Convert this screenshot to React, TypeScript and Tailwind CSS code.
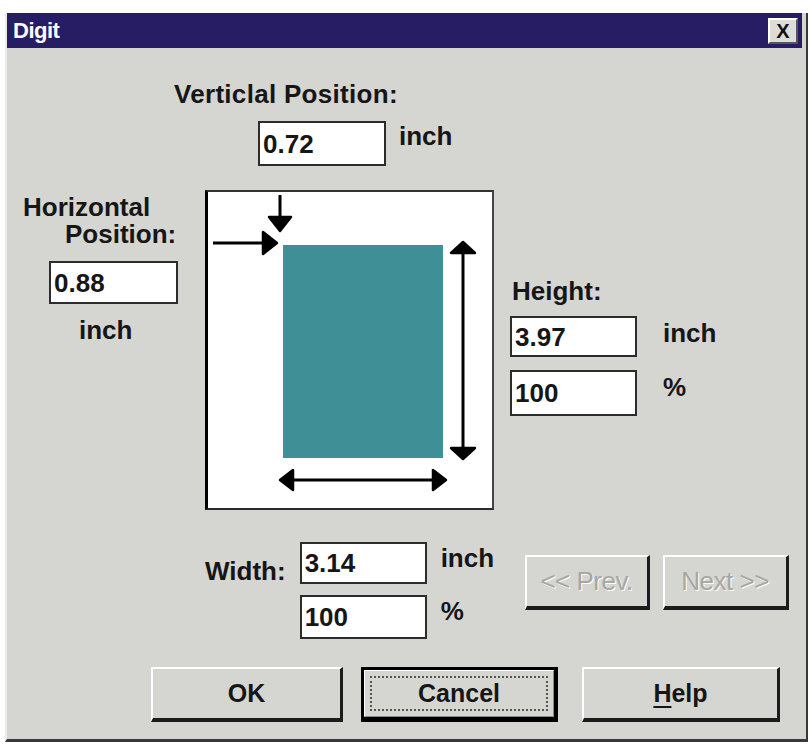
import React from "react";

function Field({ value, w, h }: { value: string; w: number; h: number }) {
  const size =
    w === 129 ? "w-[129px]" : w === 128 ? "w-[128px]" : "w-[127px]";
  const height =
    h === 41 ? "h-[41px]" : h === 42 ? "h-[42px]" : h === 43 ? "h-[43px]" : h === 44 ? "h-[44px]" : h === 45 ? "h-[45px]" : "h-[46px]";
  return (
    <div
      className={`${size} ${height} shrink-0 flex items-center bg-white border-2 border-[#2c2c2c] pl-[3px] text-[26px] leading-[30px] font-bold text-[#161616]`}
    >
      {value}
    </div>
  );
}

function Unit({ children }: { children: React.ReactNode }) {
  return <div className="text-[26px] leading-[30px] font-bold text-[#161616]">{children}</div>;
}

function Preview() {
  return (
    <div className="w-[289px] h-[320px] shrink-0 bg-white border-l-[3px] border-l-black border-t-2 border-t-[#333] border-r-2 border-r-[#444] border-b-2 border-b-[#2a2a2a]">
      <svg width="284" height="316" viewBox="0 0 284 316">
        <rect x="75" y="53" width="160" height="213" fill="#3f8f97" />
        <g stroke="#000" strokeWidth="3" fill="none">
          <line x1="72" y1="3" x2="72" y2="27" />
          <line x1="5" y1="51" x2="56" y2="51" />
          <line x1="255" y1="60" x2="255" y2="256" />
          <line x1="84" y1="288" x2="226" y2="288" />
        </g>
        <g fill="#000" stroke="#000" strokeWidth="2.5" strokeLinejoin="round">
          <polygon points="61,25 83,25 72,39" />
          <polygon points="55,40 55,62 69,51" />
          <polygon points="255,50 243,61 267,61" />
          <polygon points="255,267 243,256 267,256" />
          <polygon points="72,288 85,278 85,298" />
          <polygon points="238,288 225,278 225,298" />
        </g>
      </svg>
    </div>
  );
}

function Button({
  children,
  w,
  focused,
}: {
  children: React.ReactNode;
  w: string;
  focused?: boolean;
}) {
  if (focused) {
    return (
      <div className={`${w} h-[55px] shrink-0 border-[3px] border-black border-b-[5px] border-r-[4px] bg-[#d5d5d1]`}>
        <div className="h-full border-t border-l border-white border-b border-r border-b-[#8a8a86] border-r-[#8a8a86] p-[5px]">
          <div className="h-full flex items-center justify-center border-2 border-dotted border-[#555] text-[25px] font-bold text-[#161616]">
            {children}
          </div>
        </div>
      </div>
    );
  }
  return (
    <div
      className={`${w} h-[55px] shrink-0 flex items-center justify-center bg-[#d5d5d1] border-t-2 border-l-2 border-t-white border-l-white border-r-[3px] border-b-[4px] border-r-[#1c1c1c] border-b-[#1c1c1c] text-[25px] font-bold text-[#161616]`}
    >
      {children}
    </div>
  );
}

function NavButton({ children, w }: { children: React.ReactNode; w: string }) {
  return (
    <div
      className={`${w} h-[55px] shrink-0 flex items-center justify-center bg-[#d5d5d1] border-t-2 border-l-2 border-t-white border-l-white border-r-[3px] border-b-[4px] border-r-[#1c1c1c] border-b-[#1c1c1c] text-[26px] text-[#a6a6a2] tracking-[-0.5px] [text-shadow:1px_1px_0_#ffffff]`}
    >
      {children}
    </div>
  );
}

export default function App() {
  return (
    <div className="w-[812px] h-[745px] bg-white pt-[13px] overflow-hidden font-['Liberation_Sans',Arial,sans-serif]">
      <div className="ml-[5px] w-[803px] h-[729px] flex flex-col bg-[#d5d5d1] border-l-2 border-l-[#ebebe8] border-r-2 border-r-[#383838] border-b-[3px] border-b-[#383838]">
        {/* Title bar */}
        <div className="h-[35px] mr-[4px] shrink-0 flex items-center justify-between bg-[#271d64] pl-[6px] pr-[4px]">
          <span className="text-[22px] font-bold text-white tracking-[-0.5px]">Digit</span>
          <div className="w-[30px] h-[26px] flex items-center justify-center bg-[#dcdcd8] border-t-2 border-l-2 border-white border-r-2 border-b-2 border-r-[#555] border-b-[#555] text-[20px] font-bold text-[#111] leading-none">
            X
          </div>
        </div>

        {/* Vertical position */}
        <div className="mt-[31px] ml-[167px] text-[26px] leading-[30px] font-bold text-[#161616] tracking-[0.3px]">
          Verticlal Position:
        </div>
        <div className="mt-[12px] ml-[251px] flex items-start gap-[13px]">
          <Field value="0.72" w={128} h={45} />
          <Unit>inch</Unit>
        </div>

        {/* Preview row */}
        <div className="mt-[24px] flex items-start">
          <div className="w-[198px] shrink-0 flex flex-col items-start text-[26px] font-bold text-[#161616]">
            <div className="mt-[4px] ml-[16px] leading-[27px]">Horizontal</div>
            <div className="ml-[58px] leading-[27px]">Position:</div>
            <div className="mt-[13px] ml-[42px]">
              <Field value="0.88" w={129} h={43} />
            </div>
            <div className="mt-[11px] ml-[72px] leading-[30px]">inch</div>
          </div>
          <Preview />
          <div className="ml-[16px] flex flex-col items-start">
            <div className="mt-[86px] ml-[2px] text-[26px] leading-[30px] font-bold text-[#161616]">Height:</div>
            <div className="mt-[10px] flex items-start gap-[26px]">
              <Field value="3.97" w={127} h={41} />
              <div className="mt-[2px]">
                <Unit>inch</Unit>
              </div>
            </div>
            <div className="mt-[13px] flex items-start gap-[26px]">
              <Field value="100" w={127} h={46} />
              <div className="mt-[2px]">
                <Unit>%</Unit>
              </div>
            </div>
          </div>
        </div>

        {/* Width row */}
        <div className="mt-[32px] ml-[198px] flex items-start">
          <div className="mt-[14px] text-[26px] leading-[30px] font-bold text-[#161616]">Width:</div>
          <div className="ml-[14px] flex flex-col gap-[11px]">
            <div className="flex items-start gap-[14px]">
              <Field value="3.14" w={127} h={42} />
              <div className="mt-[1px] w-[60px]">
                <Unit>inch</Unit>
              </div>
            </div>
            <div className="flex items-start gap-[14px]">
              <Field value="100" w={127} h={44} />
              <div className="mt-[1px] w-[60px]">
                <Unit>%</Unit>
              </div>
            </div>
          </div>
          <div className="mt-[13px] ml-[24px] flex gap-[13px]">
            <NavButton w="w-[125px]">&lt;&lt; Prev.</NavButton>
            <NavButton w="w-[126px]">Next &gt;&gt;</NavButton>
          </div>
        </div>

        {/* Dialog buttons */}
        <div className="mt-[28px] ml-[144px] flex">
          <Button w="w-[192px]">OK</Button>
          <div className="ml-[18px]">
            <Button w="w-[197px]" focused>
              Cancel
            </Button>
          </div>
          <div className="ml-[24px]">
            <Button w="w-[198px]">
              <span className="underline underline-offset-4 decoration-2">H</span>elp
            </Button>
          </div>
        </div>
      </div>
    </div>
  );
}
